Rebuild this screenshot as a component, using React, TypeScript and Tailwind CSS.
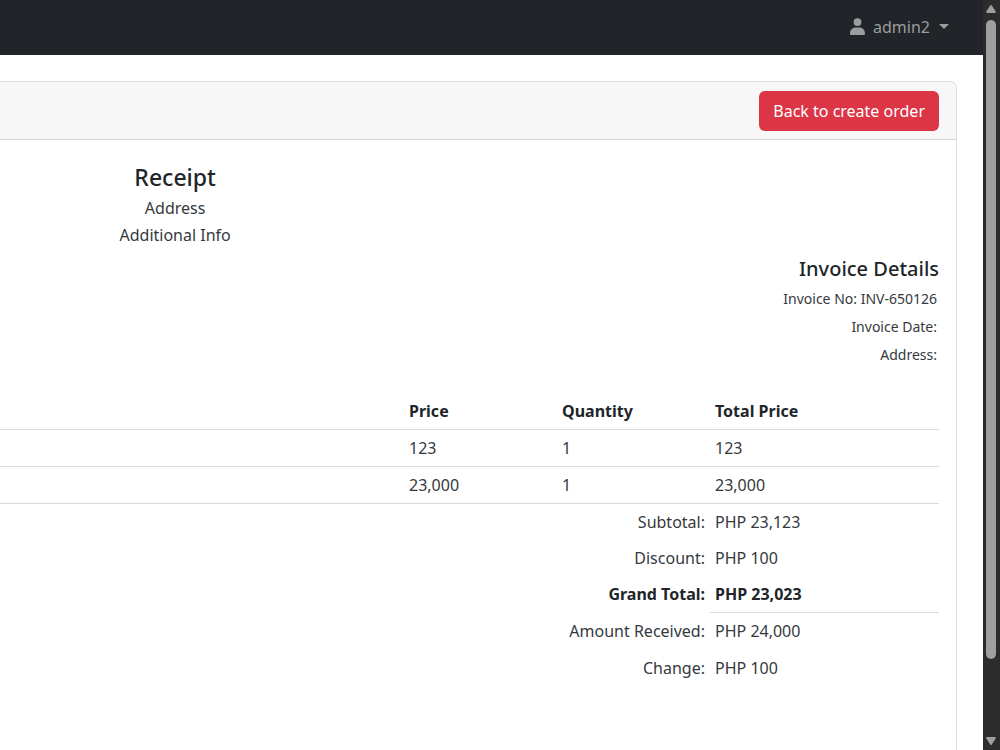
import React from "react";

const items = [
  { price: "123", quantity: "1", total: "123" },
  { price: "23,000", quantity: "1", total: "23,000" },
];

const summary = [
  { label: "Subtotal:", value: "PHP 23,123" },
  { label: "Discount:", value: "PHP 100" },
];

const payment = [
  { label: "Amount Received:", value: "PHP 24,000" },
  { label: "Change:", value: "PHP 100" },
];

function Navbar() {
  return (
    <nav className="flex h-[55px] shrink-0 items-center justify-end bg-[#212529] pr-[34px] pb-[2px]">
      <button type="button" className="flex items-center text-[#9b9d9e]">
        <svg viewBox="0 0 448 512" className="mr-2 h-[17px] w-[15px]" fill="currentColor" aria-hidden="true">
          <path d="M224 240A118 118 0 1 0 224 4a118 118 0 1 0 0 236zm-60 46C70 286 0 365 0 462V482C0 499 13 512 30 512H418c17 0 30-13 30-30V462C448 365 378 286 284 286H164z" />
        </svg>
        <span className="text-[16px] leading-6">admin2</span>
        <svg viewBox="0 0 10 5" className="ml-[9px] h-[5px] w-[10px]" fill="currentColor" aria-hidden="true">
          <path d="M0 0H10L5 5Z" />
        </svg>
      </button>
    </nav>
  );
}

function InvoiceTable() {
  return (
    <table className="mt-6 w-full table-fixed border-separate border-spacing-0 text-left text-[16px] leading-6 text-[#35393d]">
      <colgroup>
        <col />
        <col className="w-[153px]" />
        <col className="w-[153px]" />
        <col className="w-[229px]" />
      </colgroup>
      <thead className="text-[#212529]">
        <tr>
          <td className="border-b border-[#d9dbdd]" />
          <th className="border-b border-[#d9dbdd] px-[5px] py-[6px] font-bold">Price</th>
          <th className="border-b border-[#d9dbdd] px-[5px] py-[6px] font-bold">Quantity</th>
          <th className="border-b border-[#d9dbdd] px-[5px] py-[6px] font-bold">Total Price</th>
        </tr>
      </thead>
      <tbody>
        {items.map((item) => (
          <tr key={item.total}>
            <td className="border-b border-[#d9dbdd]" />
            <td className="border-b border-[#d9dbdd] px-[5px] py-[6px]">{item.price}</td>
            <td className="border-b border-[#d9dbdd] px-[5px] py-[6px]">{item.quantity}</td>
            <td className="border-b border-[#d9dbdd] px-[5px] py-[6px]">{item.total}</td>
          </tr>
        ))}
      </tbody>
      <tbody>
        {summary.map((row) => (
          <tr key={row.label}>
            <td colSpan={3} className="px-[5px] py-[6px] text-right">
              {row.label}
            </td>
            <td className="px-[5px] py-[6px]">{row.value}</td>
          </tr>
        ))}
        <tr className="font-bold text-[#212529]">
          <td colSpan={3} className="border-b border-transparent px-[5px] py-[6px] text-right">
            Grand Total:
          </td>
          <td className="border-b border-[#d9dbdd] px-[5px] py-[6px]">PHP 23,023</td>
        </tr>
        {payment.map((row) => (
          <tr key={row.label}>
            <td colSpan={3} className="border-b border-transparent px-[5px] py-[6px] text-right">
              {row.label}
            </td>
            <td className="border-b border-transparent px-[5px] py-[6px]">{row.value}</td>
          </tr>
        ))}
      </tbody>
    </table>
  );
}

function ScrollTrack() {
  return (
    <div className="flex w-[17px] shrink-0 flex-col items-center bg-[#2c2c2c] py-[5px] pr-px" aria-hidden="true">
      <svg viewBox="0 0 10 8" className="h-2 w-[10px] shrink-0" fill="#9f9f9f">
        <path d="M4.200 .6Q5 -.4 5.800 .6L9.700 6.500Q10.200 8 8.800 8H1.200Q-.2 8 .3 6.500Z" />
      </svg>
      <div className="flex w-[10px] flex-1 flex-col py-[7px]">
        <div className="h-[90%] rounded-full bg-[#9f9f9f]" />
      </div>
      <svg viewBox="0 0 10 8" className="h-2 w-[10px] shrink-0" fill="#9f9f9f">
        <path d="M4.200 7.400Q5 8.400 5.800 7.400L9.700 1.500Q10.200 0 8.800 0H1.200Q-.2 0 .3 1.500Z" />
      </svg>
    </div>
  );
}

export default function App() {
  return (
    <div className="flex h-screen overflow-hidden bg-white font-['Noto_Sans','Open_Sans',sans-serif] text-[#212529]">
      <div className="flex min-w-0 flex-1 flex-col">
        <Navbar />
        <main className="flex flex-1 flex-col pt-[26px] pr-[26px]">
          <section className="flex-1 rounded-tr-[7px] border-t border-r border-[#d9dbdd]">
            <header className="flex h-[58px] items-center justify-end rounded-tr-[6px] border-b border-[#d3d4d5] bg-[#f7f7f7] pr-[17px]">
              <a href="#create-order" className="rounded-[6px] bg-[#dc3545] px-[14px] py-2 text-[16px] leading-6 text-white">
                Back to create order
              </a>
            </header>
            <div className="pt-[21px] pr-[17px]">
              <div className="w-[37.3%] text-center">
                <h1 className="mb-[2px] text-[23px] leading-8 font-medium">Receipt</h1>
                <p className="text-[16px] leading-[27px] text-[#35393d]">Address</p>
                <p className="text-[16px] leading-[27px] text-[#35393d]">Additional Info</p>
              </div>
              <div className="mt-[5px] text-right">
                <h2 className="text-[20px] leading-[30px] font-medium">Invoice Details</h2>
                <div className="pt-px pr-[2px] text-[14px] leading-7 text-[#35393d]">
                  <p>Invoice No: INV-650126</p>
                  <p>Invoice Date:</p>
                  <p>Address:</p>
                </div>
              </div>
              <InvoiceTable />
            </div>
          </section>
        </main>
      </div>
      <ScrollTrack />
    </div>
  );
}
